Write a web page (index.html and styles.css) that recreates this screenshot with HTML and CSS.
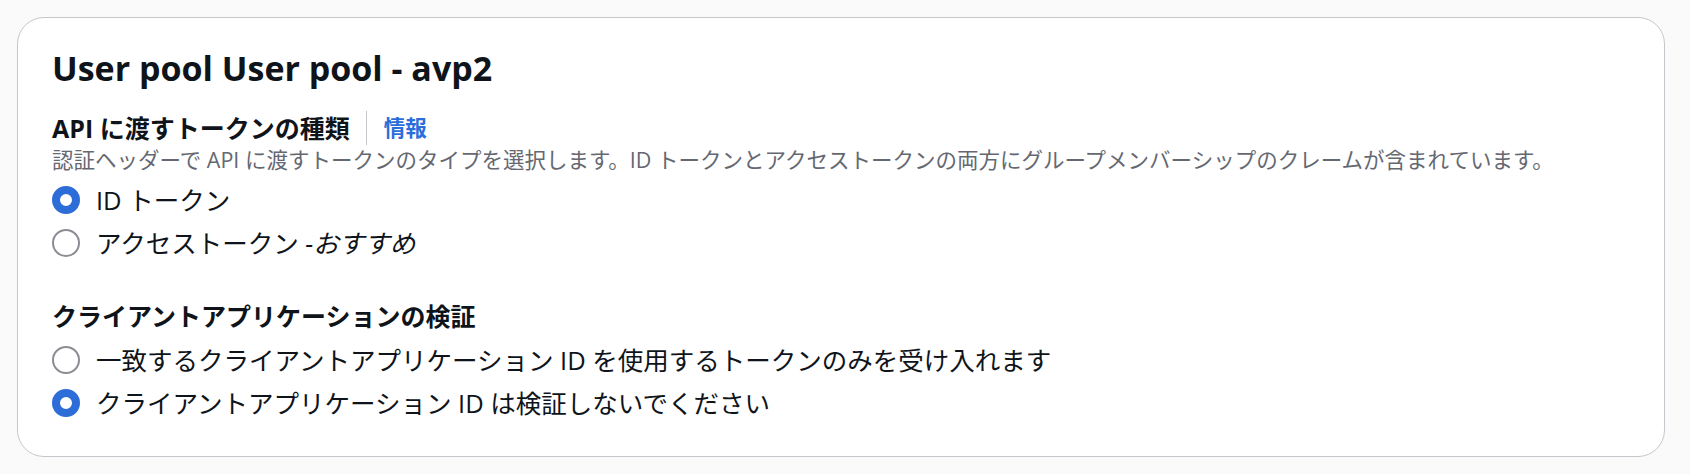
FILE: index.html
```html
<!DOCTYPE html>
<html lang="ja">
<head>
<meta charset="utf-8">
<title>User pool</title>
<link rel="stylesheet" href="styles.css">
</head>
<body>
<section class="card">
  <h2 class="card-title">User pool User pool - avp2</h2>

  <div class="field">
    <div class="label-row">
      <span class="label">API に渡すトークンの種類</span>
      <a class="info" href="#">情報</a>
    </div>
    <p class="desc">認証ヘッダーで API に渡すトークンのタイプを選択します。ID トークンとアクセストークンの両方にグループメンバーシップのクレームが含まれています。</p>
    <div class="radio-group">
      <label class="radio"><span class="dot checked"></span><span class="radio-text">ID トークン</span></label>
      <label class="radio"><span class="dot"></span><span class="radio-text">アクセストークン <i class="em">-おすすめ</i></span></label>
    </div>
  </div>

  <div class="field field-2">
    <div class="label-row">
      <span class="label">クライアントアプリケーションの検証</span>
    </div>
    <div class="radio-group">
      <label class="radio"><span class="dot"></span><span class="radio-text">一致するクライアントアプリケーション ID を使用するトークンのみを受け入れます</span></label>
      <label class="radio"><span class="dot checked"></span><span class="radio-text">クライアントアプリケーション ID は検証しないでください</span></label>
    </div>
  </div>
</section>
</body>
</html>
```

FILE: styles.css
```css
html, body {
  margin: 0;
  padding: 0;
  background: #fafafa;
}

body {
  font-family: "Open Sans", "Noto Sans CJK JP", sans-serif;
  color: #0f141a;
  padding: 17px 25px 17px 17px;
}

.card {
  background: #ffffff;
  border: 1px solid #c6c6cd;
  border-radius: 27px;
  padding: 30px 34px 36px;
}

.card-title {
  margin: 0;
  font-size: 34px;
  line-height: 41px;
  font-weight: 700;
}

.field {
  margin-top: 22px;
}

.field-2 {
  margin-top: 39px;
}

.label-row {
  display: flex;
  align-items: stretch;
}

.label {
  font-size: 25px;
  line-height: 34px;
  font-weight: 700;
}

.info {
  margin-left: 16px;
  padding-left: 17px;
  border-left: 1px solid #c6c6cd;
  font-size: 21.5px;
  font-weight: 700;
  line-height: 34px;
  color: #2a6edb;
  text-decoration: none;
}

.desc {
  margin: 0;
  font-size: 21.5px;
  line-height: 29px;
  color: #656871;
}

.radio-group {
  margin-top: 9px;
  display: flex;
  flex-direction: column;
  gap: 9px;
}

.field-2 .radio-group {
  margin-top: 10px;
}

.radio {
  display: flex;
  align-items: center;
  gap: 16px;
}

.dot {
  box-sizing: border-box;
  width: 28px;
  height: 28px;
  border-radius: 50%;
  border: 2px solid #8c8c94;
  background: #ffffff;
  flex: none;
}

.dot.checked {
  border: 8.5px solid #2c6dd8;
}

.radio-text {
  font-size: 25.5px;
  line-height: 34px;
}

.em {
  font-style: italic;
}
```
